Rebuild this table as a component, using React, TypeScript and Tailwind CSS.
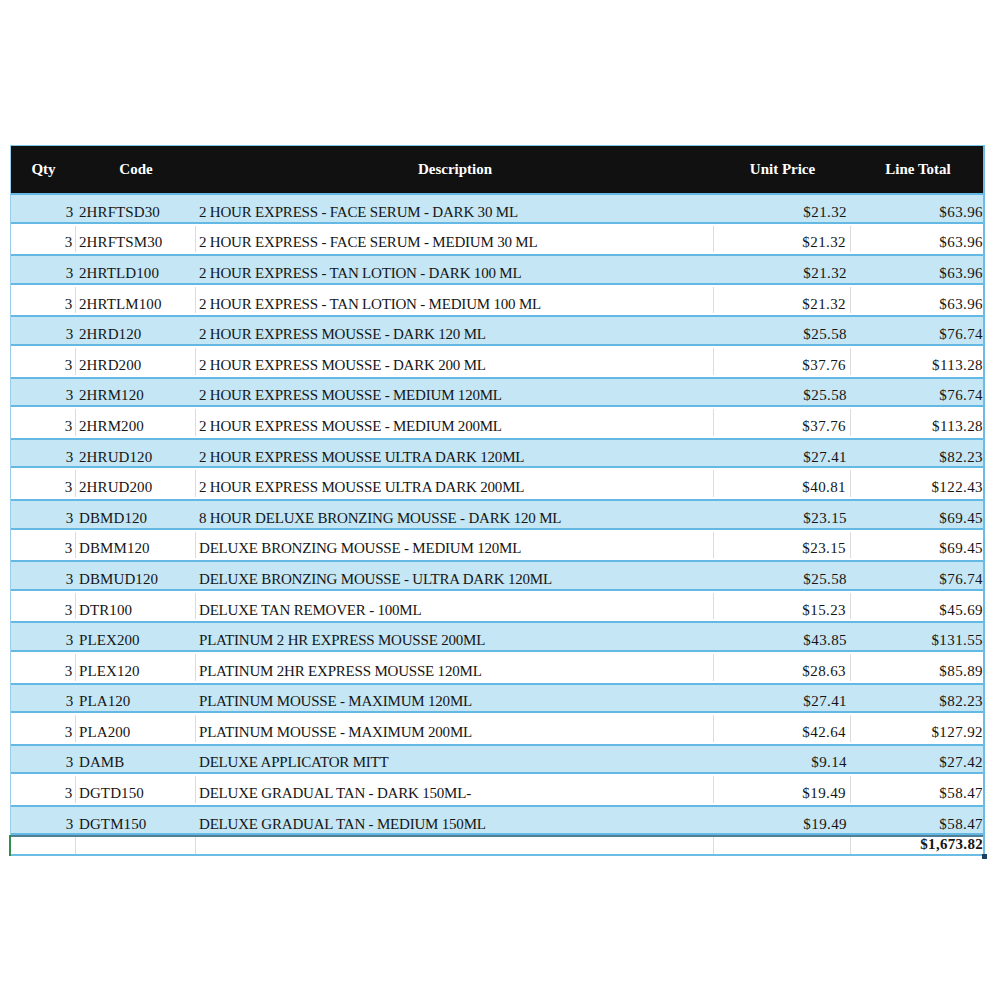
import React from "react";

const rows: [string, string, string, string, string][] = [
  ["3", "2HRFTSD30", "2 HOUR EXPRESS - FACE SERUM - DARK 30 ML", "$21.32", "$63.96"],
  ["3", "2HRFTSM30", "2 HOUR EXPRESS - FACE SERUM - MEDIUM 30 ML", "$21.32", "$63.96"],
  ["3", "2HRTLD100", "2 HOUR EXPRESS - TAN LOTION - DARK 100 ML", "$21.32", "$63.96"],
  ["3", "2HRTLM100", "2 HOUR EXPRESS - TAN LOTION - MEDIUM 100 ML", "$21.32", "$63.96"],
  ["3", "2HRD120", "2 HOUR EXPRESS MOUSSE - DARK 120 ML", "$25.58", "$76.74"],
  ["3", "2HRD200", "2 HOUR EXPRESS MOUSSE - DARK 200 ML", "$37.76", "$113.28"],
  ["3", "2HRM120", "2 HOUR EXPRESS MOUSSE - MEDIUM 120ML", "$25.58", "$76.74"],
  ["3", "2HRM200", "2 HOUR EXPRESS MOUSSE - MEDIUM 200ML", "$37.76", "$113.28"],
  ["3", "2HRUD120", "2 HOUR EXPRESS MOUSSE ULTRA DARK 120ML", "$27.41", "$82.23"],
  ["3", "2HRUD200", "2 HOUR EXPRESS MOUSSE ULTRA DARK 200ML", "$40.81", "$122.43"],
  ["3", "DBMD120", "8 HOUR DELUXE BRONZING MOUSSE - DARK 120 ML", "$23.15", "$69.45"],
  ["3", "DBMM120", "DELUXE BRONZING MOUSSE - MEDIUM 120ML", "$23.15", "$69.45"],
  ["3", "DBMUD120", "DELUXE BRONZING MOUSSE - ULTRA DARK 120ML", "$25.58", "$76.74"],
  ["3", "DTR100", "DELUXE TAN REMOVER - 100ML", "$15.23", "$45.69"],
  ["3", "PLEX200", "PLATINUM 2 HR EXPRESS MOUSSE 200ML", "$43.85", "$131.55"],
  ["3", "PLEX120", "PLATINUM 2HR EXPRESS MOUSSE 120ML", "$28.63", "$85.89"],
  ["3", "PLA120", "PLATINUM MOUSSE - MAXIMUM 120ML", "$27.41", "$82.23"],
  ["3", "PLA200", "PLATINUM MOUSSE - MAXIMUM 200ML", "$42.64", "$127.92"],
  ["3", "DAMB", "DELUXE APPLICATOR MITT", "$9.14", "$27.42"],
  ["3", "DGTD150", "DELUXE GRADUAL TAN - DARK 150ML-", "$19.49", "$58.47"],
  ["3", "DGTM150", "DELUXE GRADUAL TAN - MEDIUM 150ML", "$19.49", "$58.47"],
];

const grid = "grid grid-cols-[65px_120px_518px_137px_134px]";

export default function App() {
  return (
    <div
      className="w-[1000px] h-[1000px] bg-white text-[#151515]"
      style={{ fontFamily: '"Liberation Serif", "Times New Roman", serif' }}
    >
      <div className="pt-[145px] pl-[10px]">
        <div className="relative w-[975px] border-l border-r-2 border-l-[#9ccde6] border-r-[#6cbde6]">
          {/* header */}
          <div className={`${grid} h-[48px] bg-[#111111] border-t border-[#7cc4e8] text-white font-bold text-[15px] tracking-[0px]`}>
            <div className="flex items-center justify-center">Qty</div>
            <div className="flex items-center justify-center">Code</div>
            <div className="flex items-center justify-center">Description</div>
            <div className="flex items-center justify-center">Unit Price</div>
            <div className="flex items-center justify-center">Line Total</div>
          </div>
          {/* rows */}
          {rows.map((r, i) => {
            const blue = i % 2 === 0;
            const cell = blue ? "" : "border-r border-[#dcdcdc]";
            return (
              <div
                key={i}
                className={`${grid} h-[30.6px] border-y-2 text-[15px] tracking-[-0.2px] leading-none ${
                  blue ? "bg-[#c4e6f5] border-[#64b9e4]" : "bg-white border-transparent"
                }`}
              >
                <div className={`flex items-center justify-end pr-[3px] pt-[8px] ${cell}`}>{r[0]}</div>
                <div className={`flex items-center pl-[3px] pt-[8px] tracking-[0.1px] ${cell}`}>{r[1]}</div>
                <div className={`flex items-center pl-[3px] pt-[8px] ${cell}`}>{r[2]}</div>
                <div className={`flex items-center justify-end pr-[4px] pt-[8px] tracking-[0.4px] ${cell}`}>{r[3]}</div>
                <div className="flex items-center justify-end pr-[2px] pt-[8px] tracking-[0.4px]">{r[4]}</div>
              </div>
            );
          })}
          {/* total row */}
          <div className={`${grid} h-[21px] border-t-2 border-t-[#4f7f96] border-b-2 border-b-[#6cbde6] text-[15px] leading-none`}>
            <div className="border-r border-[#dcdcdc]" />
            <div className="border-r border-[#dcdcdc]" />
            <div className="border-r border-[#dcdcdc]" />
            <div className="border-r border-[#dcdcdc]" />
            <div className="flex items-end justify-end pr-[2px] pb-[2px] font-bold tracking-[0.3px]">$1,673.82</div>
          </div>
          <div className="absolute left-[-2px] bottom-0 w-[2px] h-[21px] bg-[#2f8f4f]" />
          <div className="absolute right-[-4px] bottom-[-3px] w-[5px] h-[5px] bg-[#1f3f5f]" />
        </div>
      </div>
    </div>
  );
}
